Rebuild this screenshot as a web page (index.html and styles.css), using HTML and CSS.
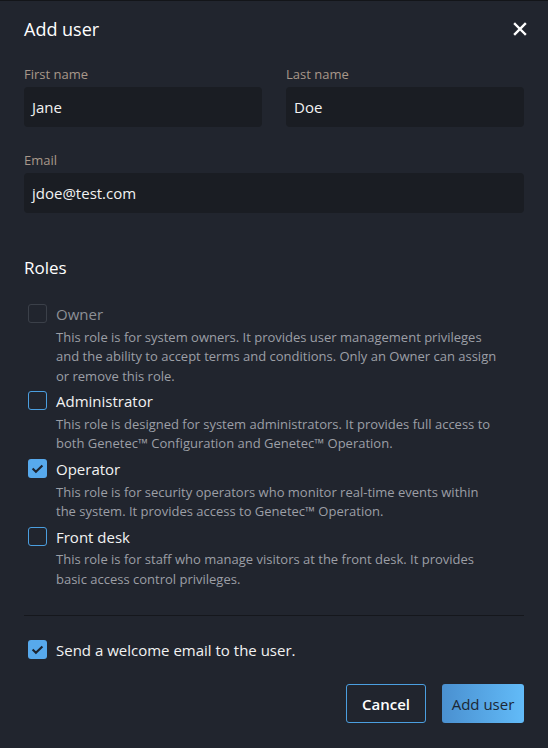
FILE: index.html
```html
<!DOCTYPE html>
<html>
<head>
<meta charset="utf-8">
<link rel="stylesheet" href="styles.css">
</head>
<body>
<div class="dialog">
  <header class="header">
    <h1 class="title">Add user</h1>
    <button class="close" aria-label="Close">
      <svg width="14" height="14" viewBox="0 0 14 14"><path d="M2 2 L12 12 M12 2 L2 12" stroke="#fff" stroke-width="2.4" stroke-linecap="square"/></svg>
    </button>
  </header>

  <div class="row">
    <div class="field">
      <label class="label">First name</label>
      <div class="input">Jane</div>
    </div>
    <div class="field">
      <label class="label">Last name</label>
      <div class="input">Doe</div>
    </div>
  </div>
  <div class="field email">
    <label class="label">Email</label>
    <div class="input">jdoe@test.com</div>
  </div>

  <h2 class="section">Roles</h2>

  <div class="roles">
    <div class="role disabled">
      <span class="box"></span>
      <div class="role-text">
        <div class="role-name">Owner</div>
        <div class="role-desc">This role is for system owners. It provides user management privileges and the ability to accept terms and conditions. Only an Owner can assign or remove this role.</div>
      </div>
    </div>
    <div class="role">
      <span class="box"></span>
      <div class="role-text">
        <div class="role-name">Administrator</div>
        <div class="role-desc">This role is designed for system administrators. It provides full access to both Genetec™ Configuration and Genetec™ Operation.</div>
      </div>
    </div>
    <div class="role">
      <span class="box checked"><svg width="19" height="19" viewBox="0 0 19 19"><path d="M4.6 9.6 L7.9 12.8 L14.4 6.4" fill="none" stroke="#1c2430" stroke-width="2.1"/></svg></span>
      <div class="role-text">
        <div class="role-name">Operator</div>
        <div class="role-desc">This role is for security operators who monitor real-time events within the system. It provides access to Genetec™ Operation.</div>
      </div>
    </div>
    <div class="role">
      <span class="box"></span>
      <div class="role-text">
        <div class="role-name">Front desk</div>
        <div class="role-desc">This role is for staff who manage visitors at the front desk. It provides basic access control privileges.</div>
      </div>
    </div>
  </div>

  <hr class="divider">

  <div class="welcome">
    <span class="box checked"><svg width="19" height="19" viewBox="0 0 19 19"><path d="M4.6 9.6 L7.9 12.8 L14.4 6.4" fill="none" stroke="#1c2430" stroke-width="2.1"/></svg></span>
    <span class="welcome-text">Send a welcome email to the user.</span>
  </div>

  <div class="actions">
    <button class="btn btn-secondary">Cancel</button>
    <button class="btn btn-primary">Add user</button>
  </div>
</div>
</body>
</html>
```

FILE: styles.css
```css
* { box-sizing: border-box; }
html, body { margin: 0; padding: 0; }
body {
  background: #21252e;
  border-top: 1px solid #131519;
  font-family: "Open Sans", "Noto Sans", sans-serif;
  color: #ffffff;
  height: 748px;
  overflow: hidden;
}
.dialog {
  padding: 16px 24px 0 24px;
}
.header {
  display: flex;
  align-items: center;
  justify-content: space-between;
  height: 24px;
}
.title {
  margin: 0;
  font-size: 18px;
  line-height: 24px;
  font-weight: 400;
  color: #fff;
}
.close {
  background: none;
  border: 0;
  padding: 0;
  margin-right: -3px;
  display: flex;
  cursor: pointer;
}
.row {
  display: grid;
  grid-template-columns: 1fr 1fr;
  column-gap: 24px;
  margin-top: 24px;
}
.field { display: flex; flex-direction: column; }
.label {
  font-size: 13px;
  color: #a8988a;
  line-height: 18px;
  margin-bottom: 4px;
}
.input {
  height: 40px;
  background: #1a1d23;
  border-radius: 4px;
  font-size: 15px;
  line-height: 40px;
  padding: 0 8px;
  color: #f2f2f2;
}
.email { margin-top: 24px; }
.section {
  margin: 43px 0 0 0;
  font-size: 17px;
  font-weight: 400;
  line-height: 24px;
}
.roles {
  margin-top: 24px;
  padding-left: 4px;
  display: flex;
  flex-direction: column;
  gap: 5px;
}
.role {
  display: flex;
  gap: 9px;
}
.box {
  flex: none;
  width: 19px;
  height: 19px;
  border: 1.5px solid #4b9fe0;
  border-radius: 3px;
  display: flex;
  align-items: center;
  justify-content: center;
}
.box svg { flex: none; }
.box.checked {
  background: #57a9ec;
  border: 0;
}
.role.disabled .box { border-color: #3b4049; }
.role-name {
  font-size: 15px;
  line-height: 20px;
  color: #f2f2f2;
}
.role.disabled .role-name { color: #8d9096; }
.role-desc {
  font-size: 13px;
  line-height: 19.5px;
  color: #9c9fa6;
  margin-top: 3.7px;
  max-width: 444px;
}
.divider {
  border: 0;
  border-top: 1px solid #15171c;
  margin: 25.5px 0 0 0;
}
.welcome {
  display: flex;
  align-items: center;
  gap: 9px;
  padding-left: 4px;
  margin-top: 24px;
  height: 20px;
}
.welcome-text {
  font-size: 15px;
  line-height: 20px;
  color: #f2f2f2;
}
.actions {
  display: flex;
  justify-content: flex-end;
  gap: 16px;
  margin-top: 24.5px;
}
.btn {
  height: 39px;
  border-radius: 3px;
  font-family: inherit;
  font-size: 15px;
  padding: 0;
  white-space: nowrap;
  cursor: pointer;
}
.btn-secondary {
  background: transparent;
  border: 1px solid #4b9fe0;
  color: #fff;
  font-weight: 600;
  width: 80px;
}
.btn-primary {
  background: linear-gradient(90deg, #4a90d0, #62bbf8);
  border: 0;
  color: #1c2734;
  width: 82px;
}
```
